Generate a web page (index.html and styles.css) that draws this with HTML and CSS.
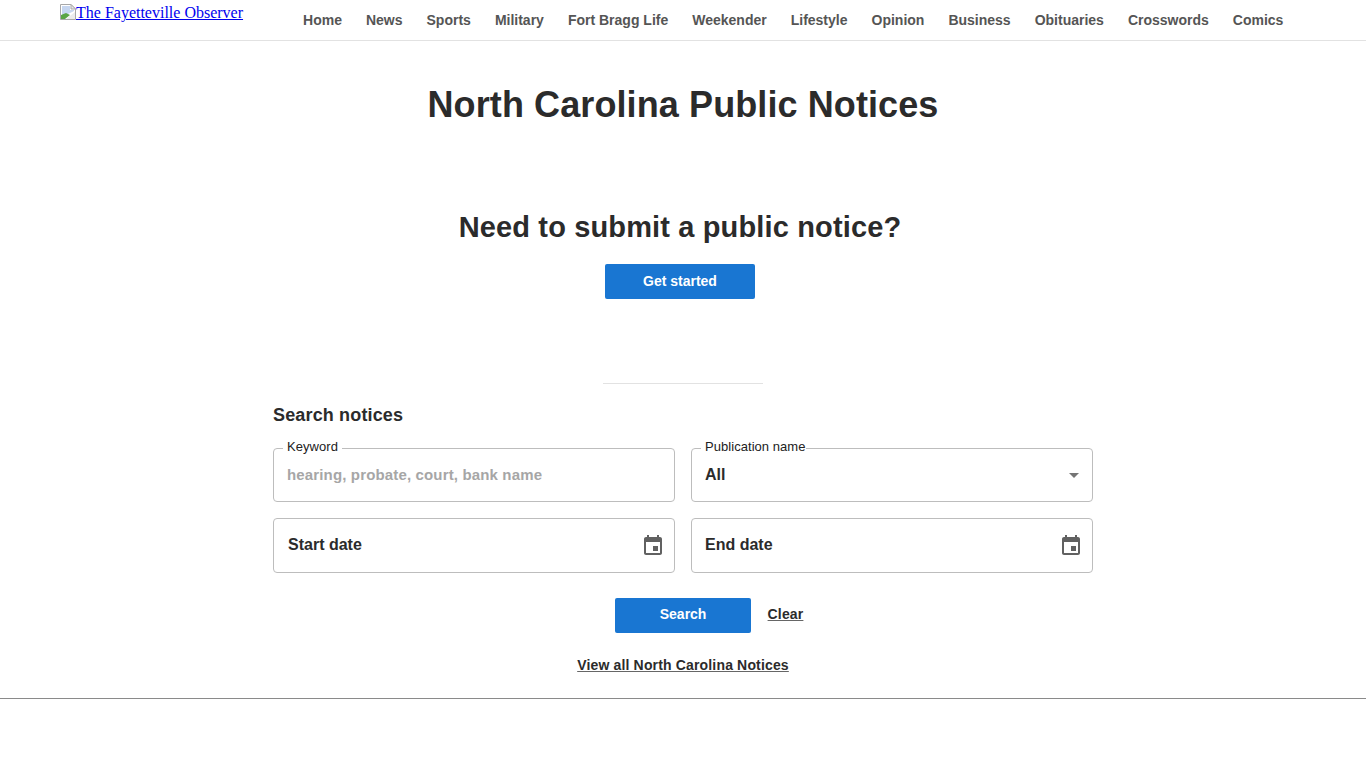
FILE: index.html
```html
<!DOCTYPE html>
<html lang="en">
<head>
<meta charset="UTF-8" />
<meta name="viewport" content="width=device-width, initial-scale=1" />
<title>North Carolina Public Notices</title>
<link rel="stylesheet" href="styles.css">
</head>
<body>

<header class="site-header">
  <a class="logo" href="#">
    <svg class="broken-img" width="16" height="16" viewBox="0 0 16 16">
      <path d="M0.5 0.5H11L15.5 5V15.5H0.5Z" fill="#fff" stroke="#a8a8a8"/>
      <path d="M11 0.5V5H15.5Z" fill="#e8e8e8" stroke="#a8a8a8"/>
      <path d="M2 2H10V6H14V7L2 13Z" fill="#c6d6f0"/>
      <path d="M1 15V11L6 9L10 11L5 15Z" fill="#5aa544"/>
      <path d="M6 15L15 8V15Z" fill="#ececec"/>
    </svg>The Fayetteville Observer</a>
  <nav class="main-nav">
    <a href="#">Home</a>
    <a href="#">News</a>
    <a href="#">Sports</a>
    <a href="#">Military</a>
    <a href="#">Fort Bragg Life</a>
    <a href="#">Weekender</a>
    <a href="#">Lifestyle</a>
    <a href="#">Opinion</a>
    <a href="#">Business</a>
    <a href="#">Obituaries</a>
    <a href="#">Crosswords</a>
    <a href="#">Comics</a>
  </nav>
</header>

<main class="content">
  <h1>North Carolina Public Notices</h1>

  <section class="submit">
    <h2>Need to submit a public notice?</h2>
    <a class="btn btn-start" href="#">Get started</a>
  </section>

  <hr class="divider">

  <section class="search">
    <h3>Search notices</h3>
    <div class="fields">
      <div class="field">
        <span class="field-label">Keyword</span>
        <span class="placeholder">hearing, probate, court, bank name</span>
      </div>
      <div class="field">
        <span class="field-label field-label-tight">Publication name</span>
        <span class="value">All</span>
        <span class="caret"></span>
      </div>
      <div class="field field-date">
        <span class="value value-start">Start date</span>
        <svg class="cal" width="24" height="24" viewBox="0 0 24 24"><path d="M17 12h-5v5h5v-5zM16 1v2H8V1H6v2H5c-1.11 0-1.99.9-1.99 2L3 19c0 1.1.89 2 2 2h14c1.1 0 2-.9 2-2V5c0-1.1-.9-2-2-2h-1V1h-2zm3 18H5V8h14v11z"/></svg>
      </div>
      <div class="field field-date">
        <span class="value">End date</span>
        <svg class="cal" width="24" height="24" viewBox="0 0 24 24"><path d="M17 12h-5v5h5v-5zM16 1v2H8V1H6v2H5c-1.11 0-1.99.9-1.99 2L3 19c0 1.1.89 2 2 2h14c1.1 0 2-.9 2-2V5c0-1.1-.9-2-2-2h-1V1h-2zm3 18H5V8h14v11z"/></svg>
      </div>
    </div>
    <div class="actions">
      <a class="btn btn-search" href="#">Search</a>
      <a class="text-link text-link-clear" href="#">Clear</a>
    </div>
    <p class="view-all"><a class="text-link" href="#">View all North Carolina Notices</a></p>
  </section>
</main>

<hr class="footer-rule">

</body>
</html>
```

FILE: styles.css
```css
body { margin: 0; background: #fff; font-family: "Liberation Sans", Arial, sans-serif; color: #2b2b2b; }

.site-header { display: flex; height: 40px; border-bottom: 1px solid #e2e2e2; padding-left: 60px; }
.logo { font-family: "Liberation Serif", serif; font-size: 16px; line-height: 18px; height: 18px; margin-top: 4px; color: #0000ee; text-decoration: underline; white-space: nowrap; }
.broken-img { vertical-align: -2px; }
.main-nav { display: flex; gap: 24px; margin-left: 60px; padding-top: 12px; }
.main-nav a { font-size: 14px; line-height: 16px; font-weight: 700; color: #555; text-decoration: none; white-space: nowrap; }

.content { display: flex; flex-direction: column; align-items: center; }
h1 { margin: 42px 0 0; font-size: 36px; line-height: 44px; font-weight: 700; letter-spacing: 0.1px; }

.submit { display: flex; flex-direction: column; align-items: center; margin-top: 82px; margin-left: -6px; }
h2 { margin: 0; font-size: 29px; line-height: 36px; font-weight: 700; letter-spacing: 0.14px; }
.btn { display: block; border-radius: 2px; background: #1976d2; color: #fff; font-size: 14px; font-weight: 700; line-height: 35px; height: 35px; text-align: center; text-decoration: none; }
.btn-start { width: 150px; margin-top: 19px; }

.divider { width: 160px; margin: 84px 0 0; border: 0; border-top: 1px solid #e2e2e2; }

.search { width: 820px; }
h3 { margin: 20px 0 0; font-size: 18px; line-height: 22px; font-weight: 700; letter-spacing: 0.15px; }
.fields { display: grid; grid-template-columns: 402px 402px; column-gap: 16px; row-gap: 16px; margin-top: 22px; }
.field { position: relative; display: flex; align-items: center; justify-content: space-between; box-sizing: border-box; height: 54px; padding: 0 13px; border: 1px solid #bdbdbd; border-radius: 4px; }
.field-date { height: 55px; }
.field-label { position: absolute; top: -10px; left: 9px; padding: 0 4px; background: #fff; font-size: 13px; line-height: 16px; letter-spacing: 0.05px; color: #222; }
.field-label-tight { padding-right: 0; }
.placeholder { font-size: 15px; font-weight: 700; letter-spacing: 0.15px; color: #a6a6a6; margin-bottom: 2px; }
.value { font-size: 16px; font-weight: 700; color: #2b2b2b; }
.field-date .value { margin-bottom: 2px; }
.value-start { margin-left: 1px; }
.caret { width: 0; height: 0; border-left: 5px solid transparent; border-right: 5px solid transparent; border-top: 5px solid #757575; }
.cal { fill: #616161; margin-right: -4px; }

.actions { display: flex; align-items: center; justify-content: center; gap: 17px; margin-top: 25px; padding-left: 52px; }
.btn-search { width: 136px; line-height: 33px; padding-left: 1px; box-sizing: border-box; }
.text-link { font-size: 14px; font-weight: 700; letter-spacing: 0.16px; color: #2b2b2b; text-decoration: underline; text-decoration-color: #666; }
.text-link-clear { margin-bottom: 4px; }
.view-all { margin: 23px 0 0; text-align: center; line-height: 18px; }

.footer-rule { margin: 24px 0 0; border: 0; border-top: 1px solid #8a8a8a; }
```
